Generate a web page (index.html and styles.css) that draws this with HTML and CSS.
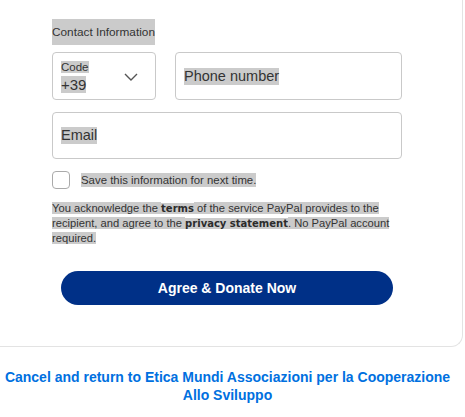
FILE: index.html
```html
<!DOCTYPE html>
<html lang="en">
<head>
<meta charset="utf-8">
<title>Contact Information</title>
<link rel="stylesheet" href="styles.css">
</head>
<body>
<div class="card">
  <div class="form">
    <div class="heading"><span class="hl">Contact Information</span></div>
    <div class="row">
      <div class="field code">
        <div class="code-text">
          <span class="hl code-label">Code</span>
          <span class="hl code-value">+39</span>
        </div>
        <svg class="chevron" width="14" height="8" viewBox="0 0 14 8"><polyline points="1,1 7,7 13,1" fill="none" stroke="#555" stroke-width="1.4"/></svg>
      </div>
      <div class="field phone"><span class="hl input-text">Phone number</span></div>
    </div>
    <div class="field email"><span class="hl input-text">Email</span></div>
    <div class="check">
      <span class="box"></span>
      <span class="hl check-text">Save this information for next time.</span>
    </div>
    <p class="legal"><span class="hl">You acknowledge the </span><b class="hl">terms</b><span class="hl"> of the service PayPal provides to the</span><br><span class="hl">recipient, and agree to the </span><b class="hl">privacy statement</b><span class="hl">. No PayPal account</span><br><span class="hl">required.</span></p>
    <div class="actions"><button class="donate">Agree &amp; Donate Now</button></div>
  </div>
</div>
<div class="cancel"><a href="#">Cancel and return to Etica Mundi Associazioni per la Cooperazione</a><br><a href="#">Allo Sviluppo</a></div>
</body>
</html>
```
FILE: styles.css
```css
html, body {
  margin: 0;
  padding: 0;
  background: #ffffff;
}
body {
  font-family: "Liberation Sans", Arial, sans-serif;
  color: #333333;
}
.card {
  width: 463px;
  box-sizing: border-box;
  border-right: 1px solid #e3e3e3;
  border-bottom: 1px solid #e3e3e3;
  border-bottom-right-radius: 12px;
  padding: 19px 0 41px 52px;
}
.form {
  width: 350px;
  display: flex;
  flex-direction: column;
}
.hl {
  background: #cbcbcb;
}
.heading {
  height: 26px;
  font-size: 11.8px;
}
.heading .hl {
  display: inline-block;
  line-height: 26px;
  height: 26px;
}
.row {
  margin-top: 7px;
  display: flex;
  gap: 19px;
}
.field {
  box-sizing: border-box;
  height: 48px;
  border: 1px solid #c9c9c9;
  border-radius: 4px;
  padding: 0 8px;
  display: flex;
  align-items: center;
}
.code {
  width: 104px;
  justify-content: space-between;
  padding-right: 17px;
}
.code-text {
  display: flex;
  flex-direction: column;
  align-items: flex-start;
  gap: 3px;
  margin-top: 1px;
}
.code-label {
  font-size: 11.5px;
  line-height: 12px;
}
.code-value {
  font-size: 15px;
  line-height: 17px;
}
.chevron {
  display: block;
  margin-top: 1px;
}
.phone {
  flex: 1;
}
.input-text {
  font-size: 14.5px;
  line-height: 17px;
}
.email {
  margin-top: 12px;
  height: 47px;
}
.check {
  margin-top: 12px;
  display: flex;
  align-items: center;
  gap: 11px;
}
.box {
  width: 18px;
  height: 18px;
  box-sizing: border-box;
  border: 1px solid #aaaaaa;
  border-radius: 4px;
}
.check-text {
  font-size: 11.4px;
  line-height: 14px;
}
.legal {
  margin: 12px 0 0;
  font-size: 11.2px;
  line-height: 15px;
  white-space: nowrap;
}
.legal b {
  font-family: "DejaVu Sans", sans-serif;
  font-size: 10px;
  font-weight: bold;
  color: #2c2c2c;
}
.actions {
  margin-top: 25px;
  display: flex;
  justify-content: center;
}
.donate {
  width: 332px;
  height: 34px;
  border: none;
  border-radius: 17px;
  background: #003087;
  color: #ffffff;
  font-family: "Liberation Sans", Arial, sans-serif;
  font-weight: bold;
  font-size: 14px;
  cursor: pointer;
}
.cancel {
  width: 455px;
  margin-top: 21px;
  text-align: center;
  font-size: 14px;
  line-height: 18px;
}
.cancel a {
  color: #0070e0;
  font-weight: bold;
  text-decoration: none;
}
```
